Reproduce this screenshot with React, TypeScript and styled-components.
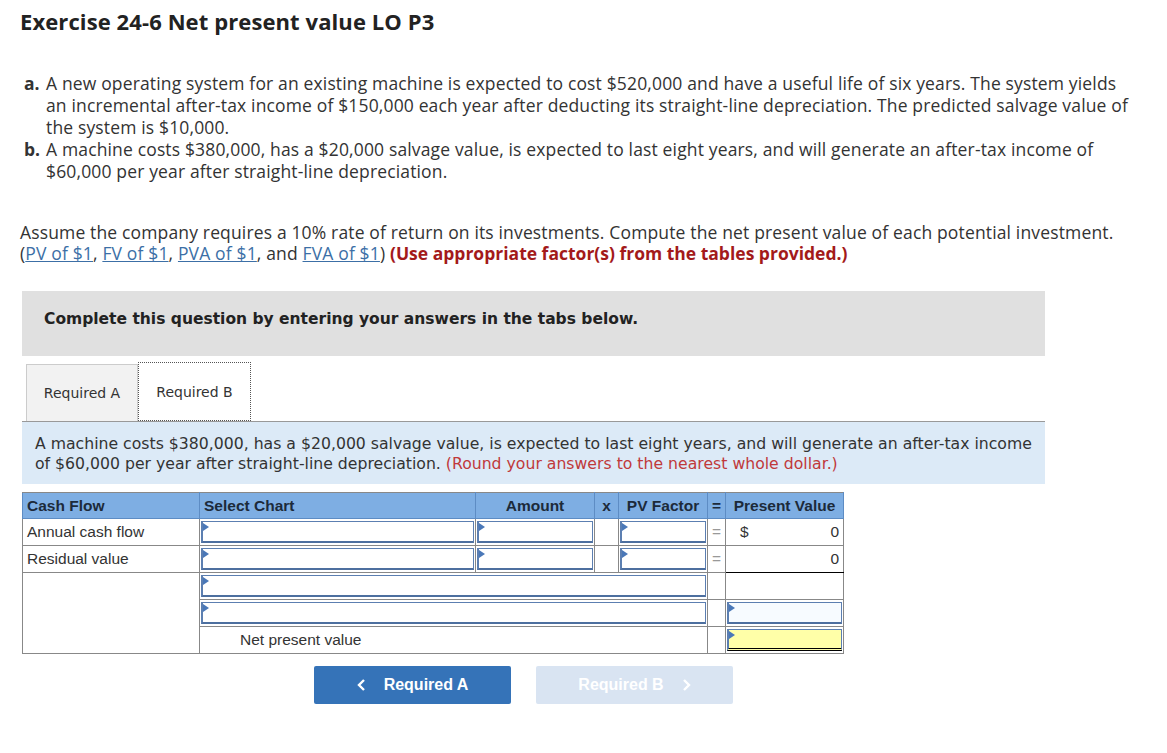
import styled, { createGlobalStyle } from "styled-components";

const GlobalStyle = createGlobalStyle`
  body {
    margin: 0;
    background: #fff;
    font-family: "Open Sans", Lato, sans-serif;
    color: #333;
  }
`;

interface Row {
  label: string;
  pv: string;
  dollar?: boolean;
}

const rows: Row[] = [
  { label: "Annual cash flow", pv: "0", dollar: true },
  { label: "Residual value", pv: "0" },
];

const ChevronIcon = ({ dir }: { dir: "left" | "right" }) => (
  <svg width="9" height="14" viewBox="0 0 9 14">
    <polyline
      points={dir === "left" ? "7,2 2,7 7,12" : "2,2 7,7 2,12"}
      fill="none"
      stroke="currentColor"
      strokeWidth="2.4"
    />
  </svg>
);

const App = () => {
  return (
    <>
      <GlobalStyle />
      <Page>
        <Title>Exercise 24-6 Net present value LO P3</Title>

        <List>
          <Item>
            <Mark>a.</Mark>
            <span>
              A new operating system for an existing machine is expected to cost $520,000 and have a useful life of six
              years. The system yields an incremental after-tax income of $150,000 each year after deducting its
              straight-line depreciation. The predicted salvage value of the system is $10,000.
            </span>
          </Item>
          <Item>
            <Mark>b.</Mark>
            <span>
              A machine costs $380,000, has a $20,000 salvage value, is expected to last eight years, and will generate
              an after-tax income of $60,000 per year after straight-line depreciation.
            </span>
          </Item>
        </List>

        <Para>
          Assume the company requires a 10% rate of return on its investments. Compute the net present value of each
          potential investment.
          <br />(<Link>PV of $1</Link>, <Link>FV of $1</Link>, <Link>PVA of $1</Link>, and <Link>FVA of $1</Link>){" "}
          <Warn>(Use appropriate factor(s) from the tables provided.)</Warn>
        </Para>

        <Notice>Complete this question by entering your answers in the tabs below.</Notice>

        <Tabs>
          <Tab>Required A</Tab>
          <Tab active>Required B</Tab>
        </Tabs>

        <Prompt>
          A machine costs $380,000, has a $20,000 salvage value, is expected to last eight years, and will generate an
          after-tax income of $60,000 per year after straight-line depreciation.{" "}
          <PromptRed>(Round your answers to the nearest whole dollar.)</PromptRed>
        </Prompt>

        <Table>
          <colgroup>
            <col style={{ width: 177 }} />
            <col style={{ width: 276 }} />
            <col style={{ width: 119 }} />
            <col style={{ width: 24 }} />
            <col style={{ width: 89 }} />
            <col style={{ width: 18 }} />
            <col style={{ width: 118 }} />
          </colgroup>
          <thead>
            <tr>
              <Th>Cash Flow</Th>
              <Th>Select Chart</Th>
              <Th center>Amount</Th>
              <Th center>x</Th>
              <Th center>PV Factor</Th>
              <Th center>=</Th>
              <Th center>Present Value</Th>
            </tr>
          </thead>
          <tbody>
            {rows.map((r, i) => (
              <tr key={r.label}>
                <Td>{r.label}</Td>
                <InCell>
                  <Field />
                </InCell>
                <InCell>
                  <Field />
                </InCell>
                <Td />
                <InCell>
                  <Field />
                </InCell>
                <EqCell>=</EqCell>
                <ValueCell underline={i === 1}>
                  {r.dollar && <Dollar>$</Dollar>}
                  <span>{r.pv}</span>
                </ValueCell>
              </tr>
            ))}
            <tr>
              <Td rowSpan={3} />
              <InCell colSpan={4}>
                <Field />
              </InCell>
              <EqCell />
              <Td />
            </tr>
            <tr>
              <InCell colSpan={4}>
                <Field />
              </InCell>
              <EqCell />
              <InCell>
                <Field tone="light" />
              </InCell>
            </tr>
            <tr>
              <NpvLabel colSpan={4}>Net present value</NpvLabel>
              <EqCell />
              <InCell>
                <Field tone="yellow" />
              </InCell>
            </tr>
          </tbody>
        </Table>

        <Nav>
          <NavButton>
            <ChevronIcon dir="left" />
            <span>Required A</span>
          </NavButton>
          <NavButton disabled>
            <span>Required B</span>
            <ChevronIcon dir="right" />
          </NavButton>
        </Nav>
      </Page>
    </>
  );
};

const Page = styled.div`
  padding: 6px 20px 0 20px;
`;

const Title = styled.h1`
  margin: 0;
  font-size: 22px;
  line-height: 30px;
  font-weight: 700;
  color: #222;
  letter-spacing: 0.1px;
`;

const List = styled.div`
  margin-top: 36px;
  padding: 0 10px 0 4px;
  font-size: 17.5px;
  line-height: 22px;
  letter-spacing: 0.15px;
`;

const Item = styled.div`
  display: grid;
  grid-template-columns: 22px 1fr;
`;

const Mark = styled.b`
  font-weight: 700;
  letter-spacing: 0;
`;

const Para = styled.p`
  margin: 40px 0 0 0;
  font-size: 17.5px;
  line-height: 21px;
  letter-spacing: 0.15px;
`;

const Link = styled.span`
  color: #3c6fa6;
  text-decoration: underline;
`;

const Warn = styled.b`
  color: #a31a1a;
  font-weight: 700;
  letter-spacing: 0;
`;

const Notice = styled.div`
  box-sizing: border-box;
  margin: 27px 0 0 2px;
  width: 1023px;
  height: 65px;
  padding: 18px 0 0 22px;
  background: #e0e0e0;
  font-family: "DejaVu Sans", Verdana, sans-serif;
  font-size: 15.5px;
  line-height: 20px;
  font-weight: 700;
  color: #222;
`;

const Tabs = styled.div`
  display: flex;
  align-items: flex-end;
  margin: 6px 0 0 6px;
  height: 59px;
`;

const Tab = styled.div<{ active?: boolean }>`
  display: flex;
  align-items: center;
  justify-content: center;
  box-sizing: border-box;
  width: ${(p) => (p.active ? "113px" : "112px")};
  height: ${(p) => (p.active ? "59px" : "57px")};
  background: ${(p) => (p.active ? "#fff" : "#f2f2f2")};
  border: ${(p) => (p.active ? "1px dotted #555" : "1px solid #ccc")};
  border-bottom: ${(p) => (p.active ? "1px dotted #555" : "none")};
  font-family: "DejaVu Sans", Verdana, sans-serif;
  font-size: 14px;
  color: #333;
`;

const Prompt = styled.div`
  margin-left: 2px;
  width: 1010px;
  padding: 12px 0 10px 13px;
  border-top: 1px solid #999;
  background: #dceaf7;
  font-family: "DejaVu Sans", Verdana, sans-serif;
  font-size: 15.7px;
  line-height: 20px;
  color: #333;
`;

const PromptRed = styled.span`
  color: #c0393b;
`;

const Table = styled.table`
  margin: 8px 0 0 2px;
  border-collapse: collapse;
  table-layout: fixed;
  width: 821px;
  font-family: "Liberation Sans", Arial, sans-serif;
  font-size: 15.5px;
  color: #333;
  border: 1px solid #888;
`;

const Th = styled.th<{ center?: boolean }>`
  height: 25px;
  padding: 0 4px;
  background: #7eaee3;
  border: 1px solid #5d8cc4;
  border-top-color: #888;
  text-align: ${(p) => (p.center ? "center" : "left")};
  font-weight: 700;
  color: #1c2a3a;
  white-space: nowrap;
`;

const Td = styled.td`
  height: 24px;
  padding: 0 4px;
  border: 1px solid #888;
  white-space: nowrap;
`;

const InCell = styled.td`
  height: 24px;
  padding: 1px;
  border: 1px solid #888;
`;

const EqCell = styled.td`
  height: 24px;
  padding: 0;
  border: 1px solid #888;
  text-align: center;
  color: #999;
`;

const ValueCell = styled.td<{ underline?: boolean }>`
  height: 24px;
  padding: 0 4px 0 14px;
  border: 1px solid #888;
  border-bottom: ${(p) => (p.underline ? "1px solid #000" : "1px solid #888")};
  text-align: right;
  position: relative;
`;

const Dollar = styled.span`
  position: absolute;
  left: 14px;
`;

const Field = styled.div<{ tone?: "light" | "yellow" }>`
  position: relative;
  box-sizing: border-box;
  height: 22px;
  background: ${(p) => (p.tone === "yellow" ? "#ffffa8" : p.tone === "light" ? "#f7fbff" : "#fff")};
  border: 1px solid #5c7fb1;
  border-left-width: 2px;
  border-bottom: ${(p) => (p.tone === "yellow" ? "3px double #000" : "2px solid #4d6f9f")};

  &::before {
    content: "";
    position: absolute;
    top: 1px;
    left: 0;
    border-top: 4px solid transparent;
    border-bottom: 4px solid transparent;
    border-left: 6px solid #4a78b8;
  }
`;

const NpvLabel = styled.td`
  height: 24px;
  padding: 0 0 0 40px;
  border: 1px solid #888;
`;

const Nav = styled.div`
  display: flex;
  gap: 25px;
  margin: 12px 0 0 294px;
`;

const NavButton = styled.div<{ disabled?: boolean }>`
  display: flex;
  align-items: center;
  justify-content: center;
  gap: 18px;
  width: 197px;
  height: 38px;
  border-radius: 2px;
  background: ${(p) => (p.disabled ? "#d9e4f2" : "#3573b8")};
  color: #fff;
  font-family: "Liberation Sans", Arial, sans-serif;
  font-size: 16px;
  font-weight: 700;
`;

export default App;
